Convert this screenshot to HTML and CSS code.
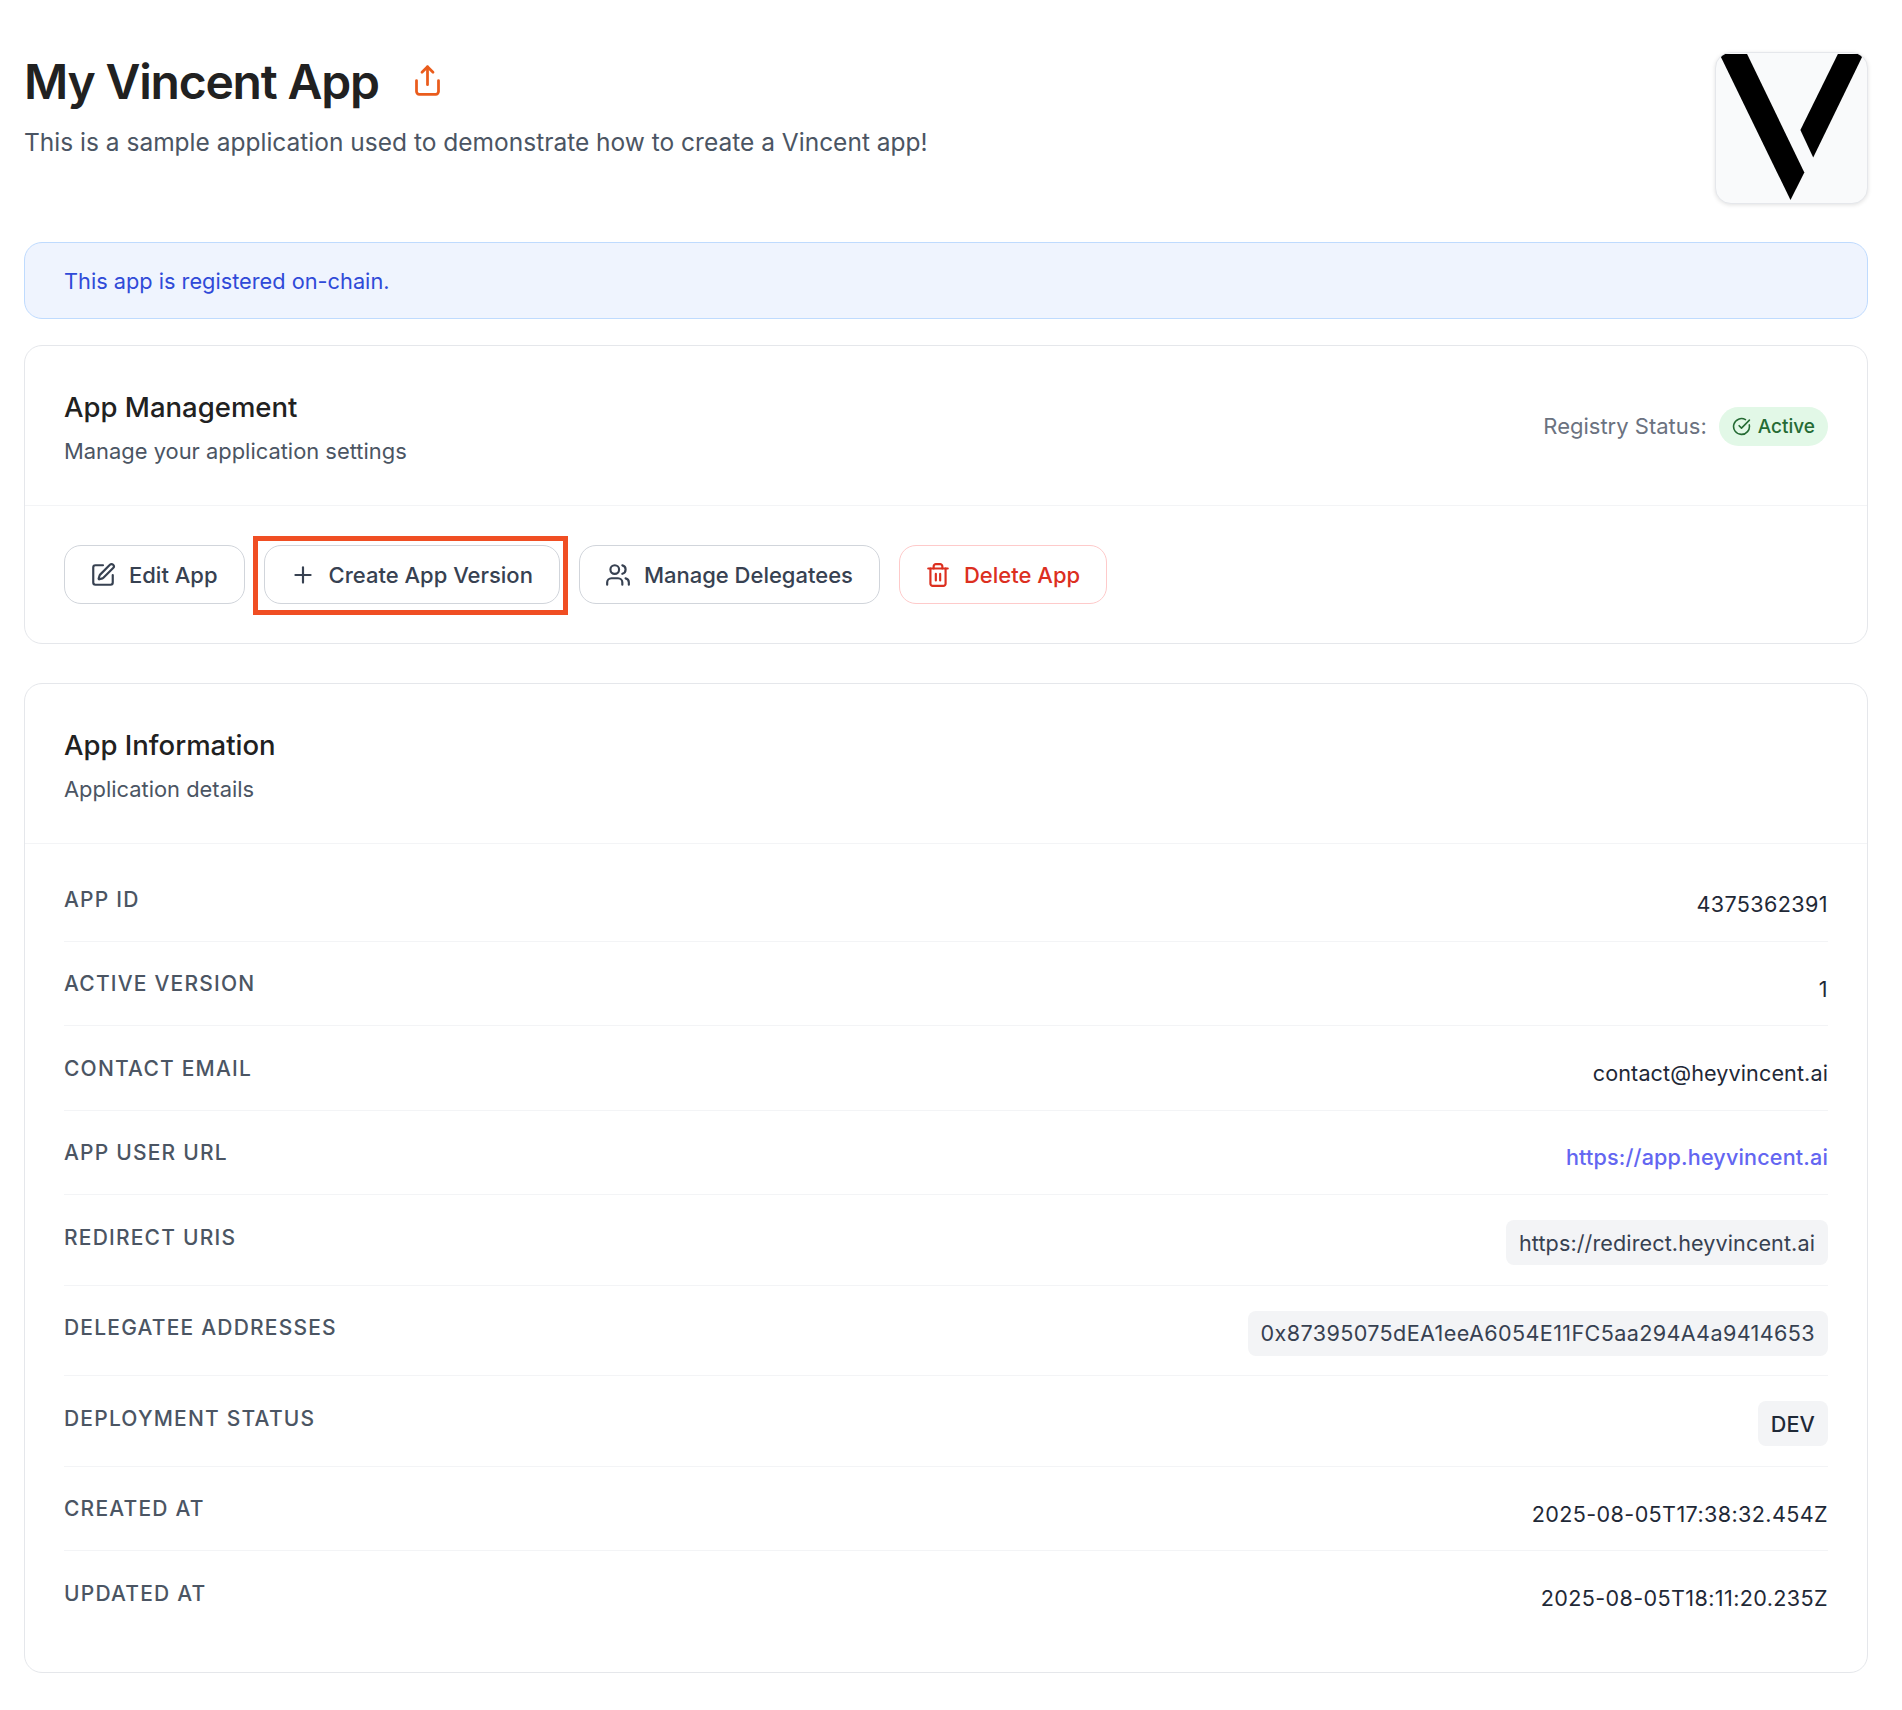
FILE: index.html
```html
<!DOCTYPE html>
<html>
	<head>
		<meta charset="utf-8" />
		<title>My Vincent App</title>
		<link rel="stylesheet" href="styles.css">
	</head>
	<body>
		<div class="page">
			<div class="top">
				<div class="top-text">
					<div class="title-row">
						<h1>My Vincent App</h1>
						<svg class="share" viewBox="0 0 24 24"><path d="M4 12v8a2 2 0 0 0 2 2h12a2 2 0 0 0 2-2v-8"/><polyline points="16 6 12 2 8 6"/><line x1="12" y1="2" x2="12" y2="15"/></svg>
					</div>
					<p class="lead">This is a sample application used to demonstrate how to create a Vincent app!</p>
				</div>
				<div class="logo">
					<svg viewBox="0 0 152 152"><polygon points="3,1 31,1 89,121 75,149"/><polygon points="123,1 149,1 98,106 85,78"/></svg>
				</div>
			</div>

			<div class="notice">This app is registered on-chain.</div>

			<div class="card">
				<div class="card-head">
					<div>
						<h2>App Management</h2>
						<p class="sub">Manage your application settings</p>
					</div>
					<div class="status">
						<span>Registry Status:</span>
						<span class="pill"><svg viewBox="0 0 24 24"><path d="M21.801 10A10 10 0 1 1 17 3.335"/><path d="m9 11 3 3L22 4"/></svg>Active</span>
					</div>
				</div>
				<div class="actions">
					<a class="btn"><svg viewBox="0 0 24 24"><path d="M12 3H5a2 2 0 0 0-2 2v14a2 2 0 0 0 2 2h14a2 2 0 0 0 2-2v-7"/><path d="M18.375 2.625a1 1 0 0 1 3 3l-9.013 9.014a2 2 0 0 1-.853.505l-2.873.84a.5.5 0 0 1-.62-.62l.84-2.873a2 2 0 0 1 .506-.852z"/></svg>Edit App</a>
					<a class="btn marked"><svg viewBox="0 0 24 24"><path d="M5 12h14"/><path d="M12 5v14"/></svg>Create App Version</a>
					<a class="btn"><svg viewBox="0 0 24 24"><path d="M16 21v-2a4 4 0 0 0-4-4H6a4 4 0 0 0-4 4v2"/><circle cx="9" cy="7" r="4"/><path d="M22 21v-2a4 4 0 0 0-3-3.87"/><path d="M16 3.13a4 4 0 0 1 0 7.75"/></svg>Manage Delegatees</a>
					<a class="btn danger"><svg viewBox="0 0 24 24"><path d="M3 6h18"/><path d="M19 6v14c0 1-1 2-2 2H7c-1 0-2-1-2-2V6"/><path d="M8 6V4c0-1 1-2 2-2h4c1 0 2 1 2 2v2"/><line x1="10" y1="11" x2="10" y2="17"/><line x1="14" y1="11" x2="14" y2="17"/></svg>Delete App</a>
				</div>
			</div>

			<div class="card">
				<div class="card-head">
					<div>
						<h2>App Information</h2>
						<p class="sub">Application details</p>
					</div>
				</div>
				<div class="info">
					<div class="row"><span class="key">App ID</span><span class="val num">4375362391</span></div>
					<div class="row"><span class="key">Active Version</span><span class="val num">1</span></div>
					<div class="row"><span class="key">Contact Email</span><span class="val">contact@heyvincent.ai</span></div>
					<div class="row"><span class="key">App User URL</span><a class="val link">https://app.heyvincent.ai</a></div>
					<div class="row"><span class="key">Redirect URIs</span><span class="val chip">https://redirect.heyvincent.ai</span></div>
					<div class="row"><span class="key">Delegatee Addresses</span><span class="val chip num">0x87395075dEA1eeA6054E11FC5aa294A4a9414653</span></div>
					<div class="row"><span class="key">Deployment Status</span><span class="val chip dark">DEV</span></div>
					<div class="row"><span class="key">Created At</span><span class="val num">2025-08-05T17:38:32.454Z</span></div>
					<div class="row"><span class="key">Updated At</span><span class="val num">2025-08-05T18:11:20.235Z</span></div>
				</div>
			</div>
		</div>
	</body>
</html>
```

FILE: styles.css
```css
*{
	margin:0px;
	padding:0px;
	box-sizing: border-box;
}
body{
	background: #fff;
	color: #1f2937;
	font-family: "Inter", "Liberation Sans", sans-serif;
}
svg{
	fill: none;
	stroke: currentColor;
	stroke-width: 2;
	stroke-linecap: round;
	stroke-linejoin: round;
	flex-shrink: 0;
}
.page{
	padding: 52px 34px 38px 24px;
	display: flex;
	flex-direction: column;
}
.top{
	display: flex;
	justify-content: space-between;
	align-items: flex-start;
	margin-bottom: 38px;
}
.title-row{
	display: flex;
	align-items: center;
	gap: 32px;
	margin-bottom: 12px;
}
h1{
	font-size: 48px;
	line-height: 60px;
	font-weight: 600;
	letter-spacing: -1.2px;
	color: #212121;
}
.share{
	width: 33px;
	height: 33px;
	margin-bottom: 4px;
	color: #ea5c1c;
}
.lead{
	font-size: 24.5px;
	line-height: 36px;
	color: #4b5563;
}
.logo{
	width: 153px;
	height: 152px;
	background: #f9fafb;
	border: 1px solid #e5e7eb;
	border-radius: 16px;
	box-shadow: 0 1px 4px rgba(0,0,0,0.12);
	overflow: hidden;
}
.logo svg{
	display: block;
	width: 100%;
	height: 100%;
	fill: #000;
	stroke: none;
}
.notice{
	height: 77px;
	background: #eff4fe;
	border: 1px solid #bfdbfe;
	border-radius: 18px;
	padding: 0 39px;
	display: flex;
	align-items: center;
	font-size: 21.75px;
	color: #2f4ad8;
	margin-bottom: 26px;
}
.card{
	border: 1px solid #e5e7eb;
	border-radius: 18px;
	background: #fff;
	margin-bottom: 39px;
}
.card:last-child{
	margin-bottom: 0;
}
.card-head{
	display: flex;
	justify-content: space-between;
	align-items: center;
	padding: 44px 39px 38px;
	border-bottom: 1px solid #f3f4f6;
}
h2{
	font-size: 27.5px;
	line-height: 36px;
	font-weight: 500;
	color: #212121;
	margin-top: -1px;
	margin-bottom: 10px;
}
.sub{
	font-size: 21.9px;
	line-height: 32px;
	color: #4b5563;
}
.status{
	display: flex;
	align-items: center;
	gap: 12px;
	margin-bottom: 5px;
	font-size: 22px;
	color: #6b7280;
}
.pill{
	display: flex;
	align-items: center;
	gap: 7px;
	height: 39px;
	padding: 0 13px;
	border-radius: 20px;
	background: #e2f8e7;
	color: #256b34;
	font-size: 19px;
	font-weight: 500;
}
.pill svg{
	width: 19px;
	height: 19px;
}
.actions{
	display: flex;
	gap: 19px;
	padding: 39px;
}
.btn{
	display: flex;
	align-items: center;
	gap: 13px;
	height: 59px;
	padding: 0 26px 0 25px;
	border: 1px solid #d1d5db;
	border-radius: 17px;
	font-size: 22px;
	font-weight: 450;
	color: #374151;
}
.btn svg{
	width: 26px;
	height: 26px;
}
.btn.danger{
	border-color: #fecaca;
	color: #dc2f1f;
}
.btn.marked{
	position: relative;
}
.btn.marked::after{
	content: "";
	position: absolute;
	top: -10px;
	bottom: -12px;
	left: -12px;
	right: -9px;
	border: 5px solid #f04e23;
}
.info{
	padding: 13px 39px 37px;
}
.row{
	display: flex;
	justify-content: space-between;
	align-items: flex-start;
	padding: 25px 0 19.5px;
	border-bottom: 1px solid #f3f4f6;
}
.row:last-child{
	border-bottom: none;
}
.key{
	margin-top: 1.5px;
	font-size: 21px;
	line-height: 32px;
	font-weight: 500;
	color: #4b5563;
	text-transform: uppercase;
	letter-spacing: 1.2px;
}
.val{
	margin-top: 7px;
	margin-bottom: 2px;
	font-size: 21.6px;
	line-height: 30px;
	letter-spacing: 0.1px;
	color: #1f2937;
}
.num{
	letter-spacing: 0.37px;
}
.link{
	margin-top: 6px;
	margin-bottom: 3px;
	font-weight: 500;
	letter-spacing: 0.15px;
	color: #6366f1;
}
.chip{
	margin-top: 0;
	margin-bottom: 0;
	padding: 7.5px 13px;
	background: #f3f4f6;
	border-radius: 8px;
	color: #374151;
}
.chip.dark{
	color: #1f2937;
	font-weight: 500;
}
```
